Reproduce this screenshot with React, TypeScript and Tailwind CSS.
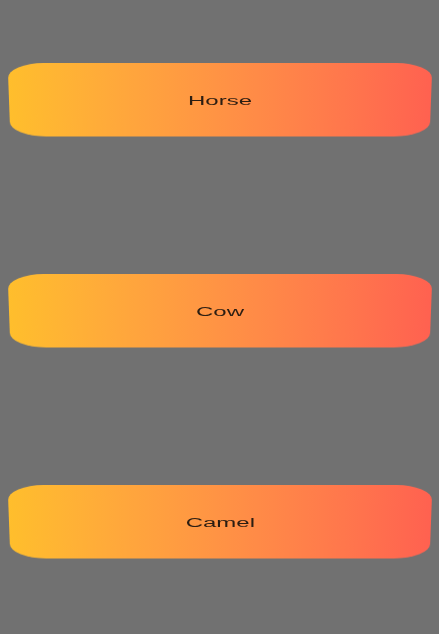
import React from "react";

const animals = ["Horse", "Cow", "Camel"];

const App: React.FC = () => {
  return (
    <div className="w-full min-h-[634px] bg-[#717171] pt-[63px] flex flex-col items-center gap-[137px]">
      {animals.map((name) => (
        <div
          key={name}
          className="w-[422px] h-[74px] ml-[1px] rounded-[36px/15px] bg-gradient-to-r from-[#ffbe2c] to-[#ff6150] flex items-center justify-center [transform:perspective(500px)_rotateX(-5deg)]"
        >
          <span className="inline-block scale-x-[2] text-[12px] leading-none text-[#2a1d12] font-['Liberation_Sans',Arial,sans-serif] mt-[2px]">
            {name}
          </span>
        </div>
      ))}
    </div>
  );
};

export default App;
